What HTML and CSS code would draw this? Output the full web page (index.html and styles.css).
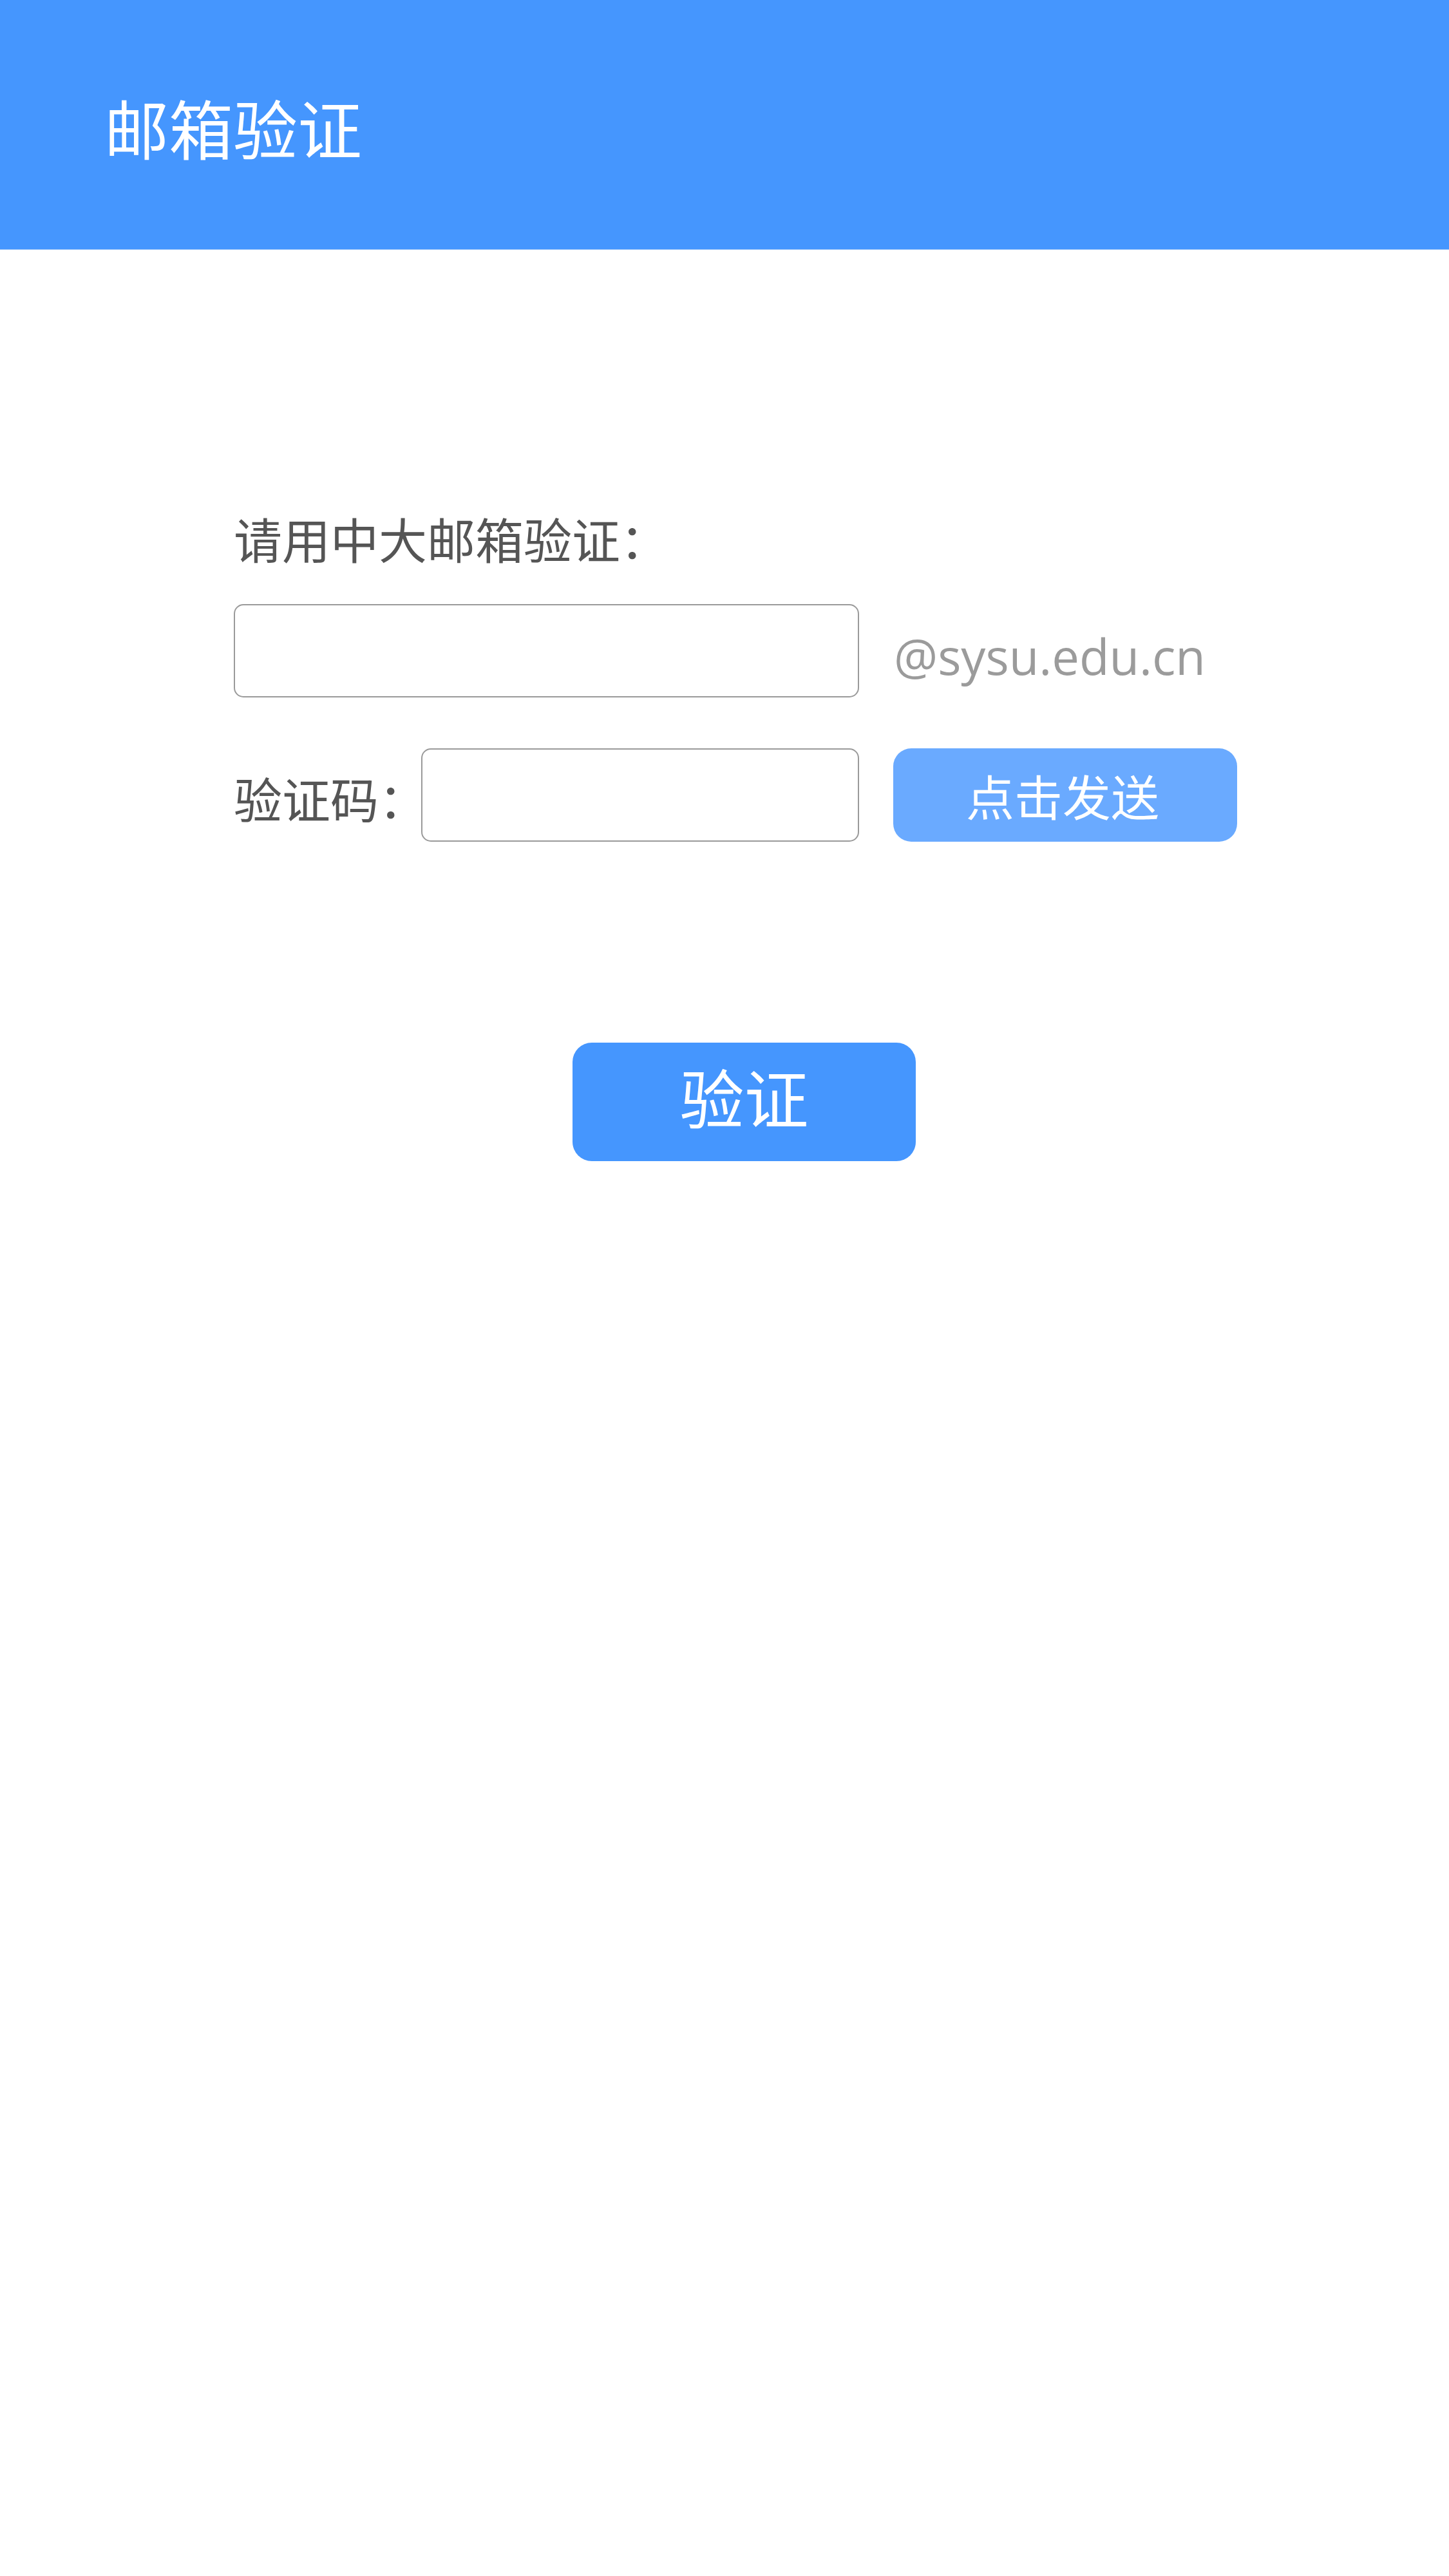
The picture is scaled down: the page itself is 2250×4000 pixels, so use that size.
FILE: index.html
```html
<!DOCTYPE html>
<html lang="zh-CN">
<head>
<meta charset="utf-8">
<title>邮箱验证</title>
<link rel="stylesheet" href="styles.css">
</head>
<body>
<header class="topbar">
  <h1 class="title">邮箱验证</h1>
</header>
<main class="form">
  <div class="label-main">请用中大邮箱验证：</div>
  <div class="row row-email">
    <input class="field field-email" type="text">
    <span class="suffix">@sysu.edu.cn</span>
  </div>
  <div class="row row-code">
    <span class="label-code">验证码：</span>
    <input class="field field-code" type="text">
    <button class="btn-send" type="button">点击发送</button>
  </div>
  <button class="btn-verify" type="button">验证</button>
</main>
</body>
</html>
```

FILE: styles.css
```css
html, body {
  margin: 0;
  padding: 0;
  background: #ffffff;
  font-family: "Noto Sans CJK SC", "Noto Sans", sans-serif;
}

.topbar {
  height: 387px;
  background: #4596fe;
  border-bottom: 1px solid #a6cbf7;
  display: flex;
  align-items: center;
  box-sizing: content-box;
}

.title {
  margin: 0;
  padding: 6px 0 0 162px;
  font-size: 100px;
  font-weight: 400;
  line-height: 1.2;
  color: #ffffff;
}

.form {
  padding-left: 363px;
  padding-top: 398px;
  display: flex;
  flex-direction: column;
  align-items: flex-start;
}

.label-main {
  font-size: 75px;
  line-height: 100px;
  color: #555555;
}

.row {
  display: flex;
  align-items: center;
}

.row-email {
  margin-top: 52px;
}

.row-code {
  margin-top: 79px;
}

.field {
  box-sizing: border-box;
  height: 145px;
  border: 2px solid #9a9a9a;
  border-radius: 15px;
  background: #ffffff;
  margin: 0;
  padding: 0 20px;
  font-size: 60px;
  outline: none;
}

.field-email {
  width: 971px;
}

.suffix {
  margin-left: 54px;
  padding-top: 16px;
  font-family: "Open Sans", "Noto Sans", sans-serif;
  font-size: 76px;
  line-height: 77px;
  color: #9b9b9b;
}

.label-code {
  width: 291px;
  padding-top: 8px;
  font-size: 75px;
  line-height: 100px;
  color: #555555;
  white-space: nowrap;
}

.field-code {
  width: 680px;
}

.btn-send {
  margin-left: 53px;
  width: 534px;
  height: 145px;
  border: none;
  border-radius: 28px;
  background: #6aaaff;
  color: #ffffff;
  font-family: "Noto Sans CJK SC", sans-serif;
  font-size: 75px;
  line-height: 1;
  padding: 0 8px 0 0;
}

.btn-verify {
  margin-top: 312px;
  margin-left: 526px;
  width: 533px;
  height: 184px;
  border: none;
  border-radius: 30px;
  background: #4596fe;
  color: #ffffff;
  font-family: "Noto Sans CJK SC", sans-serif;
  font-size: 100px;
  line-height: 1;
  padding: 0 0 18px 0;
}
```
